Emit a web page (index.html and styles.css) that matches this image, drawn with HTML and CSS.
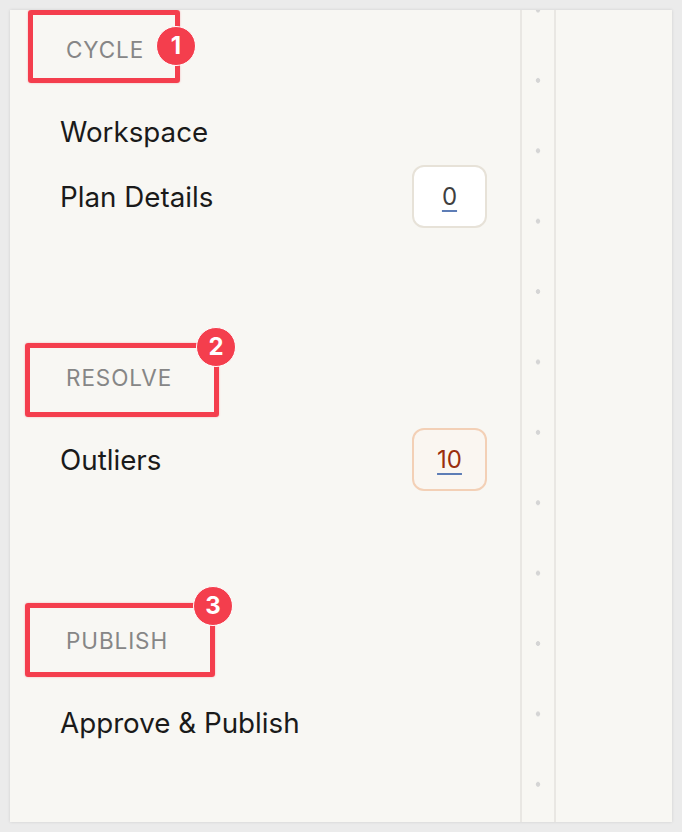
FILE: index.html
```html
<!DOCTYPE html>
<html lang="en">
<head>
<meta charset="utf-8">
<title>Plan navigation</title>
<link rel="stylesheet" href="styles.css">
</head>
<body>
<div class="panel">
  <nav class="nav">
    <section class="group">
      <h2 class="group-label">Cycle</h2>
      <a class="item" href="#">Workspace</a>
      <a class="item" href="#">Plan Details <span class="count">0</span></a>
    </section>
    <section class="group">
      <h2 class="group-label">Resolve</h2>
      <a class="item" href="#">Outliers <span class="count count-warn">10</span></a>
    </section>
    <section class="group">
      <h2 class="group-label">Publish</h2>
      <a class="item" href="#">Approve &amp; Publish</a>
    </section>
  </nav>
  <div class="rail"></div>
  <div class="content"></div>

  <div class="mark mark-1"></div>
  <div class="mark mark-2"></div>
  <div class="mark mark-3"></div>
  <span class="pin pin-1">1</span>
  <span class="pin pin-2">2</span>
  <span class="pin pin-3">3</span>
</div>
</body>
</html>
```

FILE: styles.css
```css
* {
  box-sizing: border-box;
}

html,
body {
  margin: 0;
  height: 100%;
}

body {
  background: #ebebeb;
  padding: 10px;
  font-family: Inter, "Noto Sans", "Liberation Sans", sans-serif;
}

.panel {
  position: relative;
  height: 812px;
  background: #f8f7f3;
  box-shadow: 0 0 3px rgba(0, 0, 0, 0.12);
  display: grid;
  grid-template-columns: 510px 2px 32px 2px 1fr;
  overflow: hidden;
}

.nav {
  padding-top: 19px;
  grid-column: 1;
}

.group + .group {
  margin-top: 128px;
}

.group-label {
  margin: 0 0 30px;
  height: 40px;
  display: flex;
  align-items: center;
  padding-left: 56px;
  font-size: 22.5px;
  font-weight: 400;
  letter-spacing: 0.04em;
  text-transform: uppercase;
  color: #868686;
}

.item {
  height: 65px;
  display: flex;
  align-items: center;
  justify-content: space-between;
  padding: 0 33px 0 50px;
  font-size: 27.75px;
  color: #1a1a1a;
  text-decoration: none;
}

.count {
  width: 75px;
  height: 63px;
  display: flex;
  align-items: center;
  justify-content: center;
  border: 2px solid #e7e2d8;
  border-radius: 12px;
  background: #ffffff;
  color: #3f3f3f;
  font-size: 24px;
  text-decoration: underline;
  text-decoration-color: #5d7db6;
  text-decoration-thickness: 2px;
  text-underline-offset: 5px;
}

.count-warn {
  border-color: #f3d0b6;
  background: #faf6f1;
  color: #9a2e0e;
}

.rail {
  grid-column: 3;
  background-image: radial-gradient(circle at center, #d5d5d5 0, #d5d5d5 2px, transparent 2.6px);
  background-size: 100% 70.4px;
  background-position: center -35.2px;
  border-left: 2px solid #e9e7e3;
  border-right: 2px solid #e9e7e3;
  margin: 0 -2px;
}

.content {
  grid-column: 5;
}

/* callout frames and numbered pins */
.mark {
  position: absolute;
  border: 5px solid #f43e4d;
  border-radius: 3px;
  box-shadow: 0 0 2px rgba(244, 62, 77, 0.4);
}

.mark-1 { left: 18px; top: 0; width: 152px; height: 73px; }
.mark-2 { left: 15px; top: 333px; width: 194px; height: 74px; }
.mark-3 { left: 15px; top: 593px; width: 190px; height: 74px; }

.pin {
  position: absolute;
  width: 40px;
  height: 40px;
  border-radius: 50%;
  background: #f43e4d;
  border: 1.5px solid #ffffff;
  color: #ffffff;
  font-size: 24px;
  font-weight: 700;
  display: flex;
  align-items: center;
  justify-content: center;
  line-height: 1;
}

.pin-1 { left: 146px; top: 16px; }
.pin-2 { left: 186px; top: 317px; }
.pin-3 { left: 183px; top: 576px; }
```
